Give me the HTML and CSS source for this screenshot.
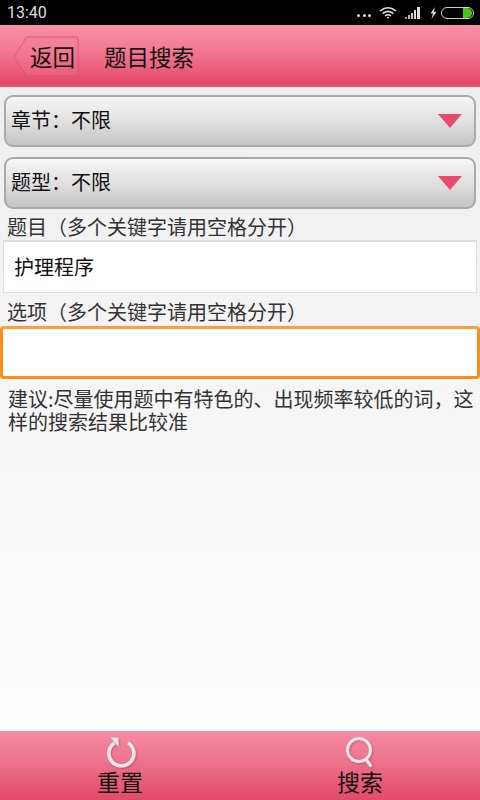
FILE: index.html
```html
<!DOCTYPE html>
<html lang="zh-CN">
<head>
    <meta charset="UTF-8">
    <meta name="viewport" content="width=device-width, initial-scale=1.0">
    <title>题目搜索</title>
    <link rel="stylesheet" href="styles.css">
</head>
<body>

<div class="phone">
    <div class="status-bar">
        <span class="clock">13:40</span>
        <div class="status-icons">
            <span class="dots"><i></i><i></i><i></i></span>
            <svg class="wifi" width="18" height="14" viewBox="0 0 18 14">
                <path d="M1 5 Q9 -1.5 17 5" fill="none" stroke="#ddd" stroke-width="1.6"/>
                <path d="M3.5 7.6 Q9 3 14.5 7.6" fill="none" stroke="#ddd" stroke-width="1.6"/>
                <path d="M6 10 Q9 7.6 12 10" fill="none" stroke="#ddd" stroke-width="1.6"/>
                <path d="M7.7 11.4 L9 10.4 L10.3 11.4 L9 12.8 Z" fill="#ddd"/>
            </svg>
            <svg class="signal" width="17" height="12" viewBox="0 0 17 12">
                <rect x="0" y="10" width="2" height="2" fill="#999"/>
                <rect x="3" y="8" width="2" height="4" fill="#bbb"/>
                <rect x="6" y="6" width="2" height="6" fill="#ccc"/>
                <rect x="9" y="3" width="2" height="9" fill="#ddd"/>
                <rect x="12" y="0" width="3" height="12" fill="#ddd"/>
            </svg>
            <svg class="bolt" width="7" height="12" viewBox="0 0 7 12">
                <path d="M5 0 L0.5 6.5 L3 6.5 L1.5 12 L6.5 4.8 L3.8 4.8 Z" fill="#ddd"/>
            </svg>
            <div class="battery"><div class="battery-fill"></div></div>
        </div>
    </div>

    <header class="title-bar">
        <div class="back-btn">
            <svg class="back-shape" width="66" height="41" viewBox="0 0 66 41">
                <path d="M13.5 1 H63 Q65 1 65 3 V38 Q65 40 63 40 H13.5 L1 21 Z" fill="#f27d95" fill-opacity="0.25" stroke="#d2506c" stroke-opacity="0.75" stroke-width="1"/>
            </svg>
            <span class="back-label">返回</span>
        </div>
        <h1 class="page-title">题目搜索</h1>
    </header>

    <main class="content">
        <div class="select-box">
            <span>章节：不限</span>
            <span class="arrow"></span>
        </div>
        <div class="select-box">
            <span>题型：不限</span>
            <span class="arrow"></span>
        </div>

        <div class="field-label first">题目（多个关键字请用空格分开）</div>
        <div class="text-input">护理程序</div>

        <div class="field-label second">选项（多个关键字请用空格分开）</div>
        <div class="text-input focused"></div>

        <p class="hint">建议:尽量使用题中有特色的、出现频率较低的词，这样的搜索结果比较准</p>
    </main>

    <footer class="bottom-bar">
        <div class="bottom-btn">
            <svg class="bottom-icon" width="32" height="32" viewBox="0 0 32 32">
                <path d="M10.5 7 A12.5 12.5 0 1 0 24 6.8" fill="none" stroke="#e6e8ea" stroke-width="3.6"/>
                <path d="M6.5 1.5 H14.5 V11 Z" fill="#e6e8ea"/>
            </svg>
            <span>重置</span>
        </div>
        <div class="bottom-btn">
            <svg class="bottom-icon" width="32" height="32" viewBox="0 0 32 32">
                <circle cx="15" cy="14" r="11.5" fill="none" stroke="#e6e8ea" stroke-width="3"/>
                <path d="M22.5 24 L26.5 29.5" fill="none" stroke="#e6e8ea" stroke-width="3.4" stroke-linecap="round"/>
            </svg>
            <span>搜索</span>
        </div>
    </footer>
</div>

</body>
</html>
```

FILE: styles.css
```css
html, body {
    margin: 0;
    padding: 0;
}
body {
    font-family: "Noto Sans CJK SC", "Liberation Sans", sans-serif;
    color: #111;
}
.phone {
    width: 480px;
    height: 800px;
    display: flex;
    flex-direction: column;
    overflow: hidden;
    background: linear-gradient(to bottom, #ececec 0%, #fdfdfd 88%, #ffffff 100%);
}

/* status bar */
.status-bar {
    height: 25px;
    flex: none;
    background-color: #000;
    display: flex;
    align-items: center;
    justify-content: space-between;
    padding: 0 6px 0 7px;
}
.clock {
    font-family: Roboto, "Liberation Sans", sans-serif;
    font-size: 16px;
    color: #ddd;
}
.status-icons {
    display: flex;
    align-items: center;
}
.dots {
    display: flex;
    gap: 2.5px;
    margin-top: 6px;
    margin-right: 8px;
}
.dots i {
    width: 3px;
    height: 3px;
    border-radius: 50%;
    background-color: #ddd;
}
.wifi {
    margin-right: 8px;
}
.signal {
    margin-right: 8px;
}
.bolt {
    margin-right: 4px;
}
.battery {
    width: 30px;
    height: 10px;
    border: 1px solid #ccc;
    border-radius: 6px;
    display: flex;
    justify-content: flex-end;
    padding: 0 1px 0 0;
}
.battery-fill {
    width: 9px;
    height: 10px;
    background-color: #4cc417;
    border-radius: 0 5px 5px 0;
}

/* title bar */
.title-bar {
    height: 62px;
    flex: none;
    box-sizing: border-box;
    background: linear-gradient(to bottom, #f98ea5 0%, #f37e96 35%, #e5496a 95%, #ee5a78 100%);
    display: flex;
    align-items: center;
    padding-left: 13px;
}
.back-btn {
    position: relative;
    width: 66px;
    height: 41px;
    display: flex;
    align-items: center;
    justify-content: flex-end;
}
.back-shape {
    position: absolute;
    left: 0;
    top: 0;
}
.back-label {
    position: relative;
    font-size: 22.5px;
    line-height: 41px;
    width: 46px;
    margin-right: 3px;
    white-space: nowrap;
    color: #111;
}
.page-title {
    margin: 0 0 0 25px;
    font-size: 22.5px;
    font-weight: normal;
    color: #111;
}

/* form */
.content {
    flex: 1;
    padding: 8px 0 0;
    min-height: 0;
}
.select-box {
    height: 52px;
    margin: 0 4px 10px;
    box-sizing: border-box;
    border: 2px solid #aaa;
    border-radius: 9px;
    background: linear-gradient(to bottom, #f6f6f6 0%, #dedede 55%, #c4c4c4 100%);
    display: flex;
    align-items: center;
    justify-content: space-between;
    padding: 0 12px 3px 5px;
    font-size: 20px;
    color: #111;
}
.arrow {
    width: 0;
    height: 0;
    margin-top: 3px;
    border-left: 12px solid transparent;
    border-right: 12px solid transparent;
    border-top: 14px solid #e74b6b;
}
.field-label {
    font-size: 20px;
    line-height: 22px;
    color: #333;
    padding-left: 7px;
    white-space: nowrap;
}
.field-label.first {
    margin-top: -3px;
}
.field-label.second {
    margin-top: 8px;
}
.text-input {
    height: 53px;
    margin: 2px 3px 0;
    box-sizing: border-box;
    background-color: #fff;
    border: 1px solid #ddd;
    border-top: 2px solid #ddd;
    padding-left: 10px;
    font-size: 20px;
    line-height: 49px;
    color: #111;
}
.text-input.focused {
    margin: 3px 0 0;
    border: 3px solid #fb8d1a;
    border-top-color: #fd9e38;
    border-radius: 4px;
}
.hint {
    margin: 8px 0 0;
    padding: 0 5px 0 8px;
    font-size: 20px;
    line-height: 23px;
    color: #333;
}

/* bottom bar */
.bottom-bar {
    height: 69px;
    flex: none;
    background: linear-gradient(to bottom, #f88ba2 0%, #f07c94 30%, #e24a69 100%);
    display: flex;
}
.bottom-btn {
    flex: 1;
    display: flex;
    flex-direction: column;
    align-items: center;
    padding-top: 5px;
    font-size: 23px;
    line-height: 26px;
    color: #111;
}
.bottom-icon {
    display: block;
    margin-left: -1px;
    filter: drop-shadow(1px 1px 1px rgba(150, 40, 70, 0.4));
}
```
